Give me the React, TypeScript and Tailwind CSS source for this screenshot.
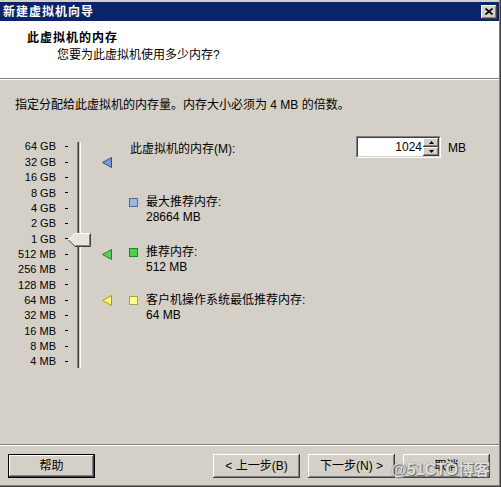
import React from "react";

const levels = [
  "64 GB",
  "32 GB",
  "16 GB",
  "8 GB",
  "4 GB",
  "2 GB",
  "1 GB",
  "512 MB",
  "256 MB",
  "128 MB",
  "64 MB",
  "32 MB",
  "16 MB",
  "8 MB",
  "4 MB",
];

// marker triangles next to the slider, keyed by row
const markers: Record<number, { fill: string; stroke: string }> = {
  1: { fill: "#7b9ad0", stroke: "#2f4c8a" },
  7: { fill: "#58d058", stroke: "#1c861c" },
  10: { fill: "#fff27a", stroke: "#b0a000" },
};

const raised =
  "bg-[#d4d0c8] shadow-[inset_-1px_-1px_0_#404040,inset_1px_1px_0_#ffffff,inset_-2px_-2px_0_#808080]";

function Triangle({ fill, stroke }: { fill: string; stroke: string }) {
  return (
    <svg width="10" height="11" viewBox="0 0 10 11">
      <polygon points="0.5,5.5 9.5,0.5 9.5,10.5" fill={fill} stroke={stroke} strokeWidth="1" />
    </svg>
  );
}

function Square({ fill, border }: { fill: string; border: string }) {
  return (
    <div
      className="h-[9px] w-[9px] shrink-0 border"
      style={{ backgroundColor: fill, borderColor: border }}
    />
  );
}

function Button({ label, def }: { label: string; def?: boolean }) {
  if (def) {
    return (
      <div className="h-[24px] w-[87px] border border-black">
        <div className={`flex h-full w-full items-center justify-center ${raised}`}>{label}</div>
      </div>
    );
  }
  return (
    <div className={`flex h-[24px] w-[87px] items-center justify-center ${raised}`}>{label}</div>
  );
}

function Slider() {
  return (
    <div className="flex pt-[3px] text-[11px]">
      <div className="flex w-[41px] flex-col">
        {levels.map((l) => (
          <div key={l} className="flex h-[15.36px] items-center justify-end whitespace-nowrap">
            {l}
          </div>
        ))}
      </div>
      <div className="flex w-[21px] flex-col">
        {levels.map((l) => (
          <div key={l} className="flex h-[15.36px] items-center">
            <div className="ml-[9px] h-[1px] w-[3px] bg-black" />
          </div>
        ))}
      </div>
      <div className="relative w-[4px]">
        <div className="mt-[3px] flex h-[226px] w-[4px]">
          <div className="w-[1px] bg-[#808080]" />
          <div className="w-[1px] bg-[#404040]" />
          <div className="w-[1px] bg-[#d4d0c8]" />
          <div className="w-[1px] bg-white" />
        </div>
        <svg
          className="absolute left-[-9px] top-[94px]"
          width="23"
          height="14"
          viewBox="0 0 23 14"
        >
          <polygon points="0.5,7 7,0.5 22.5,0.5 22.5,13.5 7,13.5" fill="#e6e4de" />
          <polyline points="0.5,7 7,0.5 22,0.5" fill="none" stroke="#ffffff" />
          <polyline points="22.5,0.5 22.5,13.5 7,13.5 0.5,7" fill="none" stroke="#404040" />
          <polyline points="21.5,1.5 21.5,12.5 7.5,12.5" fill="none" stroke="#808080" />
        </svg>
      </div>
      <div className="ml-[21px] flex flex-col">
        {levels.map((l, i) => (
          <div key={l} className="flex h-[15.36px] items-center">
            {markers[i] && <Triangle {...markers[i]} />}
          </div>
        ))}
      </div>
    </div>
  );
}

function SpinBox() {
  return (
    <div className="flex h-[22px] w-[85px] border border-b-white border-l-[#808080] border-r-white border-t-[#808080]">
      <div className="flex flex-1 border border-b-[#d4d0c8] border-l-[#404040] border-r-[#d4d0c8] border-t-[#404040] bg-white">
        <div className="flex-1 pr-[1px] text-right text-[12px] leading-[18px]">1024</div>
        <div className="flex w-[16px] flex-col">
          <div className={`flex flex-1 items-center justify-center ${raised}`}>
            <svg width="5" height="3" viewBox="0 0 5 3">
              <polygon points="2.5,0 5,3 0,3" fill="#000" />
            </svg>
          </div>
          <div className={`flex flex-1 items-center justify-center ${raised}`}>
            <svg width="5" height="3" viewBox="0 0 5 3">
              <polygon points="0,0 5,0 2.5,3" fill="#000" />
            </svg>
          </div>
        </div>
      </div>
    </div>
  );
}

function Info({
  title,
  value,
  fill,
  border,
  className,
}: {
  title: string;
  value: string;
  fill: string;
  border: string;
  className: string;
}) {
  return (
    <div className={`flex flex-col leading-[15px] ${className}`}>
      <div className="flex items-center">
        <Square fill={fill} border={border} />
        <span className="ml-[8px]">{title}</span>
      </div>
      <div className="pl-[17px]">{value}</div>
    </div>
  );
}

export default function App() {
  return (
    <div className="flex h-[487px] w-[501px] flex-col border-b border-r border-b-[#404040] border-r-[#404040] bg-[#d4d0c8] font-['Liberation_Sans','Noto_Sans_CJK_SC',sans-serif] text-[12px] text-black">
      <div className="flex flex-1 flex-col border-b border-r border-b-[#808080] border-r-[#808080] pt-[2px]">
        <div className="flex h-[19px] items-center justify-between bg-[#0a246a] pl-[3px] pr-[2px]">
          <span className="text-[12px] font-bold tracking-[1px] text-white">新建虚拟机向导</span>
          <div className={`flex h-[14px] w-[16px] items-center justify-center ${raised}`}>
            <svg width="8" height="7" viewBox="0 0 8 7">
              <path d="M0.5 0.5 L7.5 6.5 M7.5 0.5 L0.5 6.5" stroke="#000" strokeWidth="1.6" />
            </svg>
          </div>
        </div>

        <div className="h-[58px] border-b border-b-[#808080] bg-white pl-[27px] pt-[9px]">
          <div className="font-bold leading-[16px] tracking-[1px]">此虚拟机的内存</div>
          <div className="mt-[1px] pl-[30px] leading-[16px]">您要为此虚拟机使用多少内存?</div>
        </div>

        <div className="flex-1 border-t border-t-white pl-[15px] pt-[17px]">
          <div className="leading-[16px]">指定分配给此虚拟机的内存量。内存大小必须为 4 MB 的倍数。</div>
          <div className="mt-[23px] flex">
            <Slider />
            <div className="ml-[17px] flex flex-col">
              <div className="flex items-center">
                <span className="w-[227px] pt-[4px] pl-[1px]">此虚拟机的内存(M):</span>
                <SpinBox />
                <span className="ml-[7px] pt-[1px]">MB</span>
              </div>
              <Info
                className="mt-[37px]"
                title="最大推荐内存:"
                value="28664 MB"
                fill="#9cb8e0"
                border="#4a6aa8"
              />
              <Info
                className="mt-[20px]"
                title="推荐内存:"
                value="512 MB"
                fill="#50d050"
                border="#1a8a1a"
              />
              <Info
                className="mt-[18px]"
                title="客户机操作系统最低推荐内存:"
                value="64 MB"
                fill="#ffff90"
                border="#a8a040"
              />
            </div>
          </div>
        </div>

        <div className="border-t border-t-[#808080]">
          <div className="relative flex h-[40px] border-t border-t-white pl-[8px] pr-[9px] pt-[8px]">
            <Button label="帮助" def />
            <div className="flex-1" />
            <div className="flex gap-[8px]">
              <Button label="< 上一步(B)" />
              <Button label="下一步(N) >" />
              <Button label="取消" />
            </div>
            <div className="absolute right-[9px] top-[12px] text-[16px] font-bold text-white/80 [text-shadow:0_0_1px_#555,1px_1px_1px_#666]">
              @51CTO博客
            </div>
          </div>
        </div>
      </div>
    </div>
  );
}
